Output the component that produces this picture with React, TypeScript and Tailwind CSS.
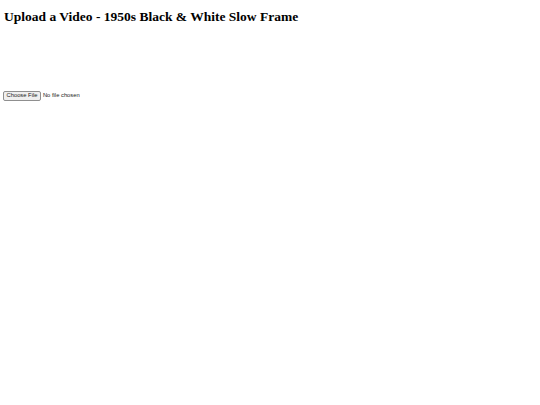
export default function App() {
  return (
    <div className="min-h-[405px] bg-white px-[4px] font-['Liberation_Serif',serif] text-black">
      <h1 className="mt-[8px] mb-[9px] text-[13.5px] font-bold leading-[17px]">
        Upload a Video - 1950s Black &amp; White Slow Frame
      </h1>
      <div className="h-[57px]" />
      <label className="flex items-center gap-[2px] font-['Liberation_Sans',sans-serif] text-[5.8px] leading-none">
        <span className="-ml-[1px] rounded-[2px] border border-[#8f8f8f] bg-[#efefef] px-[2.5px] py-[1px] text-[#222]">
          Choose File
        </span>
        <span className="text-[#222]">No file chosen</span>
        <input type="file" className="hidden" />
      </label>
    </div>
  );
}
